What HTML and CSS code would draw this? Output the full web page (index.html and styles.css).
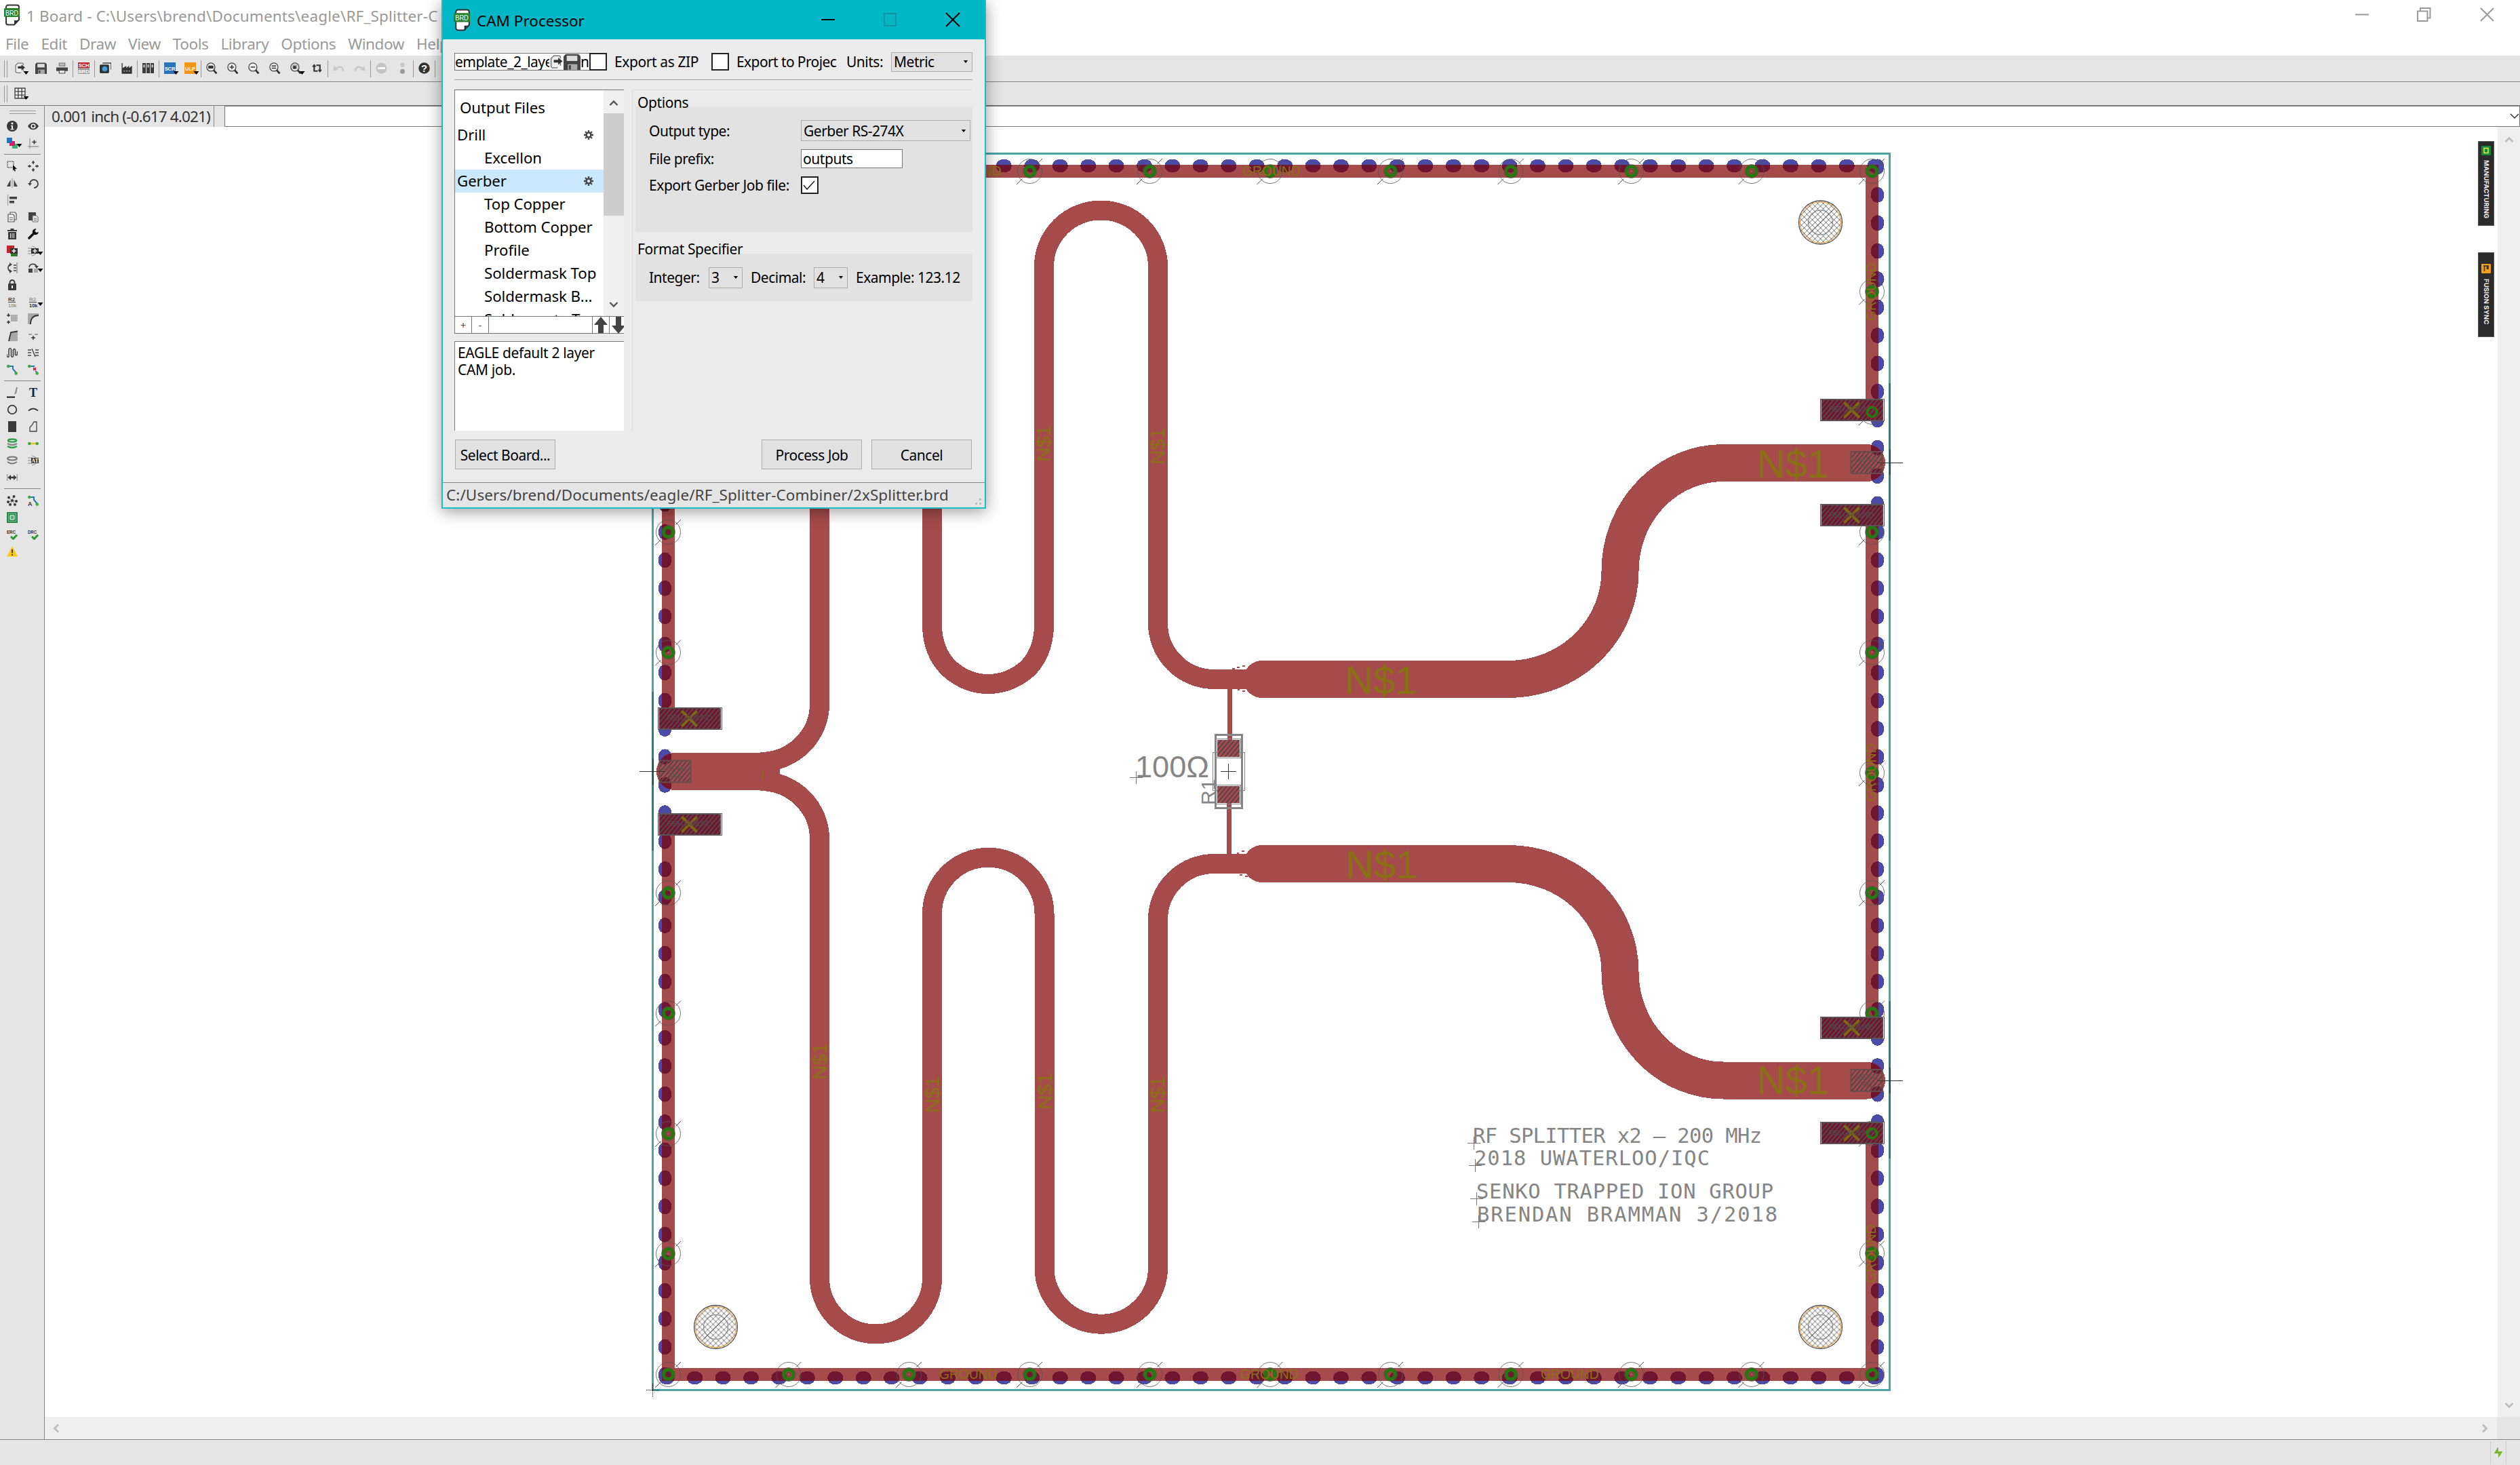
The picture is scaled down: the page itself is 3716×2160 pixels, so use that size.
FILE: index.html
```html
<!DOCTYPE html>
<html lang="en">
<head>
<meta charset="utf-8">
<title>1 Board</title>
<link rel="stylesheet" href="styles.css">
</head>
<body>
<svg class="defs" width="0" height="0">
  <symbol id="brd" viewBox="0 0 24 32"><path d="M6 1.500h13a3 3 0 0 1 3 3V23l-7 7.500H6a3 3 0 0 1-3-3v-23a3 3 0 0 1 3-3z" fill="#fff" stroke="#333" stroke-width="2"/><path d="M15 31v-7h7z" fill="#333"/><rect y="6" width="23" height="13" rx="1.500" fill="#27802a"/><text x="11.500" y="16.500" text-anchor="middle" textLength="19" lengthAdjust="spacingAndGlyphs" class="tiny" font-size="11" fill="#fff">BRD</text></symbol>
  <symbol id="open" viewBox="0 0 16 16"><path d="M9.500 14.500H4a2 2 0 0 1-2-2V4l3-3h6a1.500 1.500 0 0 1 1.500 1.500V4M12.500 9v3" fill="#eee" stroke="#777" stroke-width="1.200"/><path d="M5 5.500h5V3l5 4-5 4V8.500H5z" fill="#333"/></symbol>
  <symbol id="save" viewBox="0 0 16 16"><path d="M2 .5h12l2 2V16H0V2.500z" fill="#444"/><path d="M3 2h10v5H3z" fill="#ddd"/><path d="M4 10h9v6H4z" fill="#aaa"/><path d="M5 11h2v4H5z" fill="#444"/></symbol>
  <symbol id="lens" viewBox="0 0 16 16"><circle cx="6.500" cy="6.500" r="5.700" fill="#ececec" stroke="#444" stroke-width="1.200"/><path d="M10.500 11l4 4.500" stroke="#333" stroke-width="2.600"/></symbol>
  <symbol id="drop" viewBox="0 0 8 5"><path d="M0 0h8L4 5z"/></symbol>
  <symbol id="gear" viewBox="0 0 16 16"><circle cx="8" cy="8" r="4" fill="none" stroke="#444" stroke-width="3"/><path d="M8 0v3M8 13v3M0 8h3M13 8h3M2.300 2.300l2 2M11.700 11.700l2 2M13.700 2.300l-2 2M4.300 11.700l-2 2" stroke="#444" stroke-width="2.600"/></symbol>
  <symbol id="trace" viewBox="0 0 16 16"><path d="M3 3h6v4l5 6" fill="none" stroke="#2a73c0" stroke-width="2"/><circle cx="2.300" cy="3" r="2.300" fill="#3eaa3e"/><circle cx="13.700" cy="13.500" r="2.300" fill="#3eaa3e"/></symbol>
</svg>

<header class="titlebar">
  <svg class="app-icon" width="24" height="32"><use href="#brd"/></svg>
  <span class="app-title">1 Board - C:\Users\brend\Documents\eagle\RF_Splitter-C</span>
  <svg class="win-buttons" width="206" height="22" fill="none" stroke="#999" stroke-width="2"><path d="M0 10.500h20M92 5.500h14.500v14.500H92zM96 5V1h14.500v14.500H107M185 1l19 19M204 1l-19 19"/></svg>
</header>
<nav class="menubar"><span>File</span><span>Edit</span><span>Draw</span><span>View</span><span>Tools</span><span>Library</span><span>Options</span><span>Window</span><span>Help</span></nav>

<div class="toolbar">
  <i class="grip"></i>
  <b><svg><use href="#open"/></svg><svg class="dd"><use href="#drop"/></svg></b>
  <b><svg><use href="#save"/></svg></b>
  <b><svg viewBox="0 0 16 16"><path d="M4 1h8v4H4z" fill="#bbb" stroke="#777"/><path d="M0 7h16v5H0z" fill="#444"/><path d="M4 11h8v4H4z" fill="#eee" stroke="#444"/></svg></b>
  <i class="sep"></i>
  <b><svg viewBox="0 0 16 16"><path d="M0 0h16v8H0z" fill="#c0202c"/><path d="M0 8h16v8H0z" fill="#999"/><text x="8" y="7" class="tiny" text-anchor="middle" font-size="7" fill="#fff">SCH</text><text x="8" y="15" class="tiny" text-anchor="middle" font-size="7" fill="#fff">BRD</text></svg></b>
  <i class="sep"></i>
  <b><svg viewBox="0 0 16 16"><path d="M4 1h12v9" fill="none" stroke="#444" stroke-width="1.500"/><rect y="3" width="13" height="12" rx="1.500" fill="#333"/><circle cx="7" cy="9" r="3.600" fill="#3aa0e0"/></svg></b>
  <b><svg viewBox="0 0 16 16"><path d="M2 15V1M2 15V9l5-3v3l4-3v3l4-3v9z" fill="#333" stroke="#333" stroke-width="1.300"/><path d="M4 12h9" stroke="#ddd" stroke-dasharray="2 1.500"/></svg></b>
  <i class="sep"></i>
  <b><svg viewBox="0 0 16 16"><path d="M0 1h4.700v14H0zM5.700 1h4.700v14H5.700zM11.400 1h4.600v14h-4.600z" fill="#3a3a3a"/><path d="M1.300 3h2v4h-2zM7 3h2v4H7zM12.700 3h2v4h-2z" fill="#ccc"/></svg></b>
  <i class="sep"></i>
  <b><svg viewBox="0 0 16 16"><path d="M0 0h16v16H0z" fill="#2a73b8"/><text x="8" y="11" class="tiny" text-anchor="middle" font-size="7" fill="#fff">SCR</text></svg><svg class="dd"><use href="#drop"/></svg></b>
  <b><svg viewBox="0 0 16 16"><path d="M0 0h16v16H0z" fill="#f39517"/><text x="8" y="11" class="tiny" text-anchor="middle" font-size="7" fill="#fff">ULP</text></svg><svg class="dd"><use href="#drop"/></svg></b>
  <i class="sep"></i>
  <b><svg viewBox="0 0 16 16"><use href="#lens"/><path d="M3 4.500h7v4H3z" fill="#333"/></svg></b>
  <b><svg viewBox="0 0 16 16"><use href="#lens"/><path d="M3.500 6.500h6M6.500 3.500v6" stroke="#333" stroke-width="1.400"/></svg></b>
  <b><svg viewBox="0 0 16 16"><use href="#lens"/><path d="M3.500 6.500h6" stroke="#333" stroke-width="1.400"/></svg></b>
  <b><svg viewBox="0 0 16 16"><use href="#lens"/><path d="M3.500 5h6M3.500 8h6" stroke="#333" stroke-width="1.400"/></svg></b>
  <b><svg viewBox="0 0 16 16"><use href="#lens"/><path d="M3 3h7v6H3z" fill="#aaa"/><path d="M4 5h4v4H4z" fill="#333"/></svg><svg class="dd"><use href="#drop"/></svg></b>
  <b><svg viewBox="0 0 16 16" fill="none" stroke="#333" stroke-width="2"><path d="M4 5v7h5M12 11V4H7"/><path d="M1 6l3-4 3 4zM9 10l3 4 3-4z" fill="#333" stroke="none"/></svg></b>
  <i class="sep"></i>
  <b><svg viewBox="0 0 16 16"><path d="M14 12c0-6-5-7-9-4" fill="none" stroke="#c8c8c8" stroke-width="2.500"/><path d="M0 12l2-7 5 5z" fill="#c8c8c8"/></svg></b>
  <b><svg viewBox="0 0 16 16"><path d="M2 12c0-6 5-7 9-4" fill="none" stroke="#c8c8c8" stroke-width="2.500"/><path d="M16 12l-2-7-5 5z" fill="#c8c8c8"/></svg></b>
  <i class="sep"></i>
  <b><svg viewBox="0 0 16 16"><circle cx="8" cy="8" r="7.500" fill="#c4c4c4"/><path d="M3 8h10" stroke="#fff" stroke-width="2.500"/></svg></b>
  <b><svg viewBox="0 0 16 16"><circle cx="8" cy="3.500" r="3" fill="#c8c8c8"/><circle cx="8" cy="12.500" r="3.300" fill="#999"/></svg></b>
  <i class="sep"></i>
  <b><svg viewBox="0 0 16 16"><circle cx="8" cy="8" r="7.800" fill="#333"/><text x="8" y="13" text-anchor="middle" font-size="14" font-weight="700" fill="#fff" class="tiny">?</text></svg></b>
  <i class="sep"></i>
</div>
<div class="toolbar second">
  <i class="grip"></i>
  <b><svg viewBox="0 0 16 16"><path d="M1 1h14v14H1zM1 5.500h14M1 10.500h14M5.500 1v14M10.500 1v14" fill="#f2f2f2" stroke="#444" stroke-width="1.300"/></svg><svg class="dd"><use href="#drop"/></svg></b>
</div>

<div class="work">
  <aside class="palette">
    <div class="hgrip"></div>
    <div class="grid">
      <b><svg viewBox="0 0 16 16"><circle cx="8" cy="8" r="8" fill="#3a3a3a"/><path d="M6 7h3v5h1.500v1.300h-5V12H7V8H6z" fill="#fff"/><circle cx="8" cy="4" r="1.500" fill="#fff"/></svg></b>
      <b><svg viewBox="0 0 16 16"><path d="M0 8c4-7 12-7 16 0-4 7-12 7-16 0z" fill="#3a3a3a"/><circle cx="8" cy="8" r="3.600" fill="#fff"/><circle cx="8" cy="8" r="2" fill="#3a3a3a"/></svg></b>
      <b><svg viewBox="0 0 16 16"><path d="M8 9h8v7H8z" fill="#3cb070"/><path d="M4 5h8v7H4z" fill="#d81b60"/><path d="M0 0h8v8H0z" fill="#2a73c0"/></svg><svg class="dd"><use href="#drop"/></svg></b>
      <b><svg viewBox="0 0 16 16"><path d="M3 1v15M0 13h16" stroke="#999" stroke-width="1.300"/><path d="M6.500 6.500h6M9.500 3.500v6" stroke="#333" stroke-width="1.500"/></svg></b>
    </div>
    <hr>
    <div class="grid">
      <b><svg viewBox="0 0 16 16"><path d="M1 1h9v9H1z" fill="none" stroke="#333" stroke-width="1.400" stroke-dasharray="1.500 1.500"/><path d="M9 6l6 6-3 .3 1 3-1.500.500-1-3L9 15z" fill="#111"/></svg></b>
      <b><svg viewBox="0 0 16 16" stroke="#333" stroke-width="1.400"><path d="M8 0v5M6 2.500h4M8 11v5M6 13.500h4M0 8h5M2.500 6v4M11 8h5M13.500 6v4"/></svg></b>
      <b><svg viewBox="0 0 16 16"><path d="M8 1v14" stroke="#aaa" stroke-width="1.500"/><path d="M5.500 3v10H0zM10.500 3v10H16z" fill="#444"/></svg></b>
      <b><svg viewBox="0 0 16 16"><path d="M3 9a6 6 0 1 1 6 6" fill="none" stroke="#444" stroke-width="1.800"/><path d="M0 8h6l-3 4z" fill="#444"/></svg></b>
      <b><svg viewBox="0 0 16 16"><path d="M1.500 0v16" stroke="#aaa" stroke-width="1.500"/><path d="M4 3h11v3.500H4zM4 9h7v3.500H4z" fill="#444"/></svg></b><b></b>
      <b><svg viewBox="0 0 16 16" fill="#f4f4f4" stroke="#555" stroke-width="1.200"><path d="M5 1h7l2 2v9H5z"/><path d="M2 4h7l2 2v9H2z"/><path d="M4 9h5M4 12h5"/></svg></b>
      <b><svg viewBox="0 0 16 16"><path d="M1 1h11v12H1z" fill="#444"/><path d="M7 6h6l2 2v7H7z" fill="#eee" stroke="#666"/><path d="M9 10h4M9 12.500h4" stroke="#666"/></svg></b>
      <b><svg viewBox="0 0 16 16"><path d="M1 2h14v2H1zM5.500 0h5v2h-5zM2 5h12v11H2z" fill="#3a3a3a"/><path d="M5.500 7v7M8 7v7M10.500 7v7" stroke="#eee"/></svg></b>
      <b><svg viewBox="0 0 16 16"><path d="M2 14L10 6" stroke="#111" stroke-width="3.500" stroke-linecap="round"/><path d="M12.500 .5A4.500 4.500 0 1 0 15.800 5L12.500 6 10.300 3.800z" fill="#111"/></svg></b>
      <b><svg viewBox="0 0 16 16"><path d="M0 0h11v11H0z" fill="#c0262e"/><path d="M6 8h10v8H6z" fill="#2d7a2a"/><path d="M5 4h11v8H5z" fill="#333"/><path d="M7.500 8h6M10.500 5v6" stroke="#fff" stroke-width="1.500"/></svg></b>
      <b><svg viewBox="0 0 16 16"><path d="M0 4h6M0 8h6M0 12h6M6 1c5 1 8 4 8 7s-3 6-8 7" stroke="#888" fill="none"/><path d="M5 4h11v8H5z" fill="#333"/><path d="M7.500 8h6M10.500 5v6" stroke="#fff" stroke-width="1.500"/></svg><svg class="dd"><use href="#drop"/></svg></b>
      <b><svg viewBox="0 0 16 16"><path d="M5 3c-4 2-4 8 0 10M10 4h4M10 8h4M10 12h4" fill="none" stroke="#444" stroke-width="1.700"/><path d="M4 0l4 3-4 3zM4 10l4 3-4 3z" fill="#444"/><path d="M14 0h2v16h-2z" fill="#aaa"/></svg></b>
      <b><svg viewBox="0 0 16 16"><path d="M2 7c1-6 9-6 11-1" fill="none" stroke="#444" stroke-width="1.700"/><path d="M10 5h6l-3 4z" fill="#444"/><path d="M1 9h6v6H1z" fill="#444"/><path d="M9 9h6v6H9z" fill="#aaa"/></svg><svg class="dd"><use href="#drop"/></svg></b>
      <b><svg viewBox="0 0 16 16"><rect x="2" y="6" width="12" height="10" rx="1" fill="#3a3a3a"/><path d="M4.500 7V4.500a3.500 3.500 0 0 1 7 0V7" fill="none" stroke="#3a3a3a" stroke-width="2"/><path d="M8 9v4" stroke="#fff" stroke-width="2"/></svg></b><b></b>
      <b><svg viewBox="0 0 16 16"><text x="2" y="7" font-size="8" class="tiny" fill="#444">R2</text><path d="M2 8.500h11" stroke="#444"/><text x="2" y="15.500" font-size="7.500" class="tiny" fill="#999">10k</text></svg></b>
      <b><svg viewBox="0 0 16 16"><text x="2" y="7" font-size="8" class="tiny" fill="#999">R2</text><path d="M2 8.500h11" stroke="#444"/><text x="2" y="15.500" font-size="7.500" class="tiny" fill="#333">10k</text></svg><svg class="dd"><use href="#drop"/></svg></b>
      <b><svg viewBox="0 0 16 16"><path d="M6 3h10M6 5.500h10M6 8h10M6 10.500h10M7 3v9M10 3v9M13 3v9" stroke="#aaa" stroke-width="2"/><path d="M0 3h5M2.500 0v5M0 13h5M2.500 10.500v5" stroke="#333" stroke-width="1.500"/></svg></b>
      <b><svg viewBox="0 0 16 16"><path d="M0 0h16v4C9 4 4 9 4 16H0z" fill="#aaa"/><path d="M4 16C4 8 8 3 16 3" fill="none" stroke="#333" stroke-width="1.800"/></svg></b>
      <b><svg viewBox="0 0 16 16"><path d="M3 16L6 3l10-1v14z" fill="#aaa"/><path d="M3 16L6 3l10-1.500" fill="none" stroke="#333" stroke-width="1.800"/></svg></b>
      <b><svg viewBox="0 0 16 16"><path d="M1 6h5M10 6h5" stroke="#888" stroke-width="1.300"/><path d="M5 11h6M8 8v6" stroke="#333" stroke-width="1.500"/></svg></b>
      <b><svg viewBox="0 0 16 16"><path d="M0 10v3q2.500 3 3 0V3q2-3 3.500 0v10q1.500 3 3 0V4q2-3 3 0v7q2 2 3-1V6" fill="none" stroke="#444" stroke-width="1.600"/></svg></b>
      <b><svg viewBox="0 0 16 16"><path d="M0 4h5M0 8h5M0 12h5M11 4h5M11 8h5M11 12h5M6 2l5 12" stroke="#444" stroke-width="1.400"/></svg></b>
      <b><svg><use href="#trace"/></svg></b>
      <b><svg viewBox="0 0 16 16"><use href="#trace"/><path d="M7 4h6v6H7z" fill="#fff"/><path d="M8 5l4 4M12 5l-4 4" stroke="#d81b3a" stroke-width="1.800"/></svg></b>
    </div>
    <hr>
    <div class="grid">
      <b><svg viewBox="0 0 16 16"><path d="M0 14.500h12" stroke="#000" stroke-width="1.800"/><path d="M11 11l1-3 2-8h2l-2 9z" fill="#888"/></svg></b>
      <b><svg viewBox="0 0 16 16"><text x="8" y="14" text-anchor="middle" class="serif" font-size="18" fill="#222">T</text></svg></b>
      <b><svg viewBox="0 0 16 16"><circle cx="8" cy="8" r="6.300" fill="none" stroke="#3a3a3a" stroke-width="1.800"/></svg></b>
      <b><svg viewBox="0 0 16 16"><path d="M1 9.500q7-6 14 0" fill="none" stroke="#3a3a3a" stroke-width="2"/></svg></b>
      <b><svg viewBox="0 0 16 16"><path d="M2 0h12v16H2z" fill="#3a3a3a"/></svg></b>
      <b><svg viewBox="0 0 16 16"><path d="M3 15V9l3-3 3-5h4v14z" fill="none" stroke="#444" stroke-width="1.300"/></svg></b>
      <b><svg viewBox="0 0 16 16" fill="none" stroke-width="2.500"><path d="M1 12q7 4 14 0" stroke="#2fa04c"/><path d="M1 8q7 4 14 0" stroke="#888"/><ellipse cx="8" cy="3.500" rx="6" ry="2" fill="#fff" stroke="#2fa04c"/></svg></b>
      <b><svg viewBox="0 0 16 16"><path d="M2 8h12" stroke="#f0c020" stroke-width="2.500"/><circle cx="2.300" cy="8" r="2.300" fill="#3eaa3e"/><circle cx="13.700" cy="8" r="2.300" fill="#3eaa3e"/></svg></b>
      <b><svg viewBox="0 0 16 16" fill="none" stroke="#777" stroke-width="2"><ellipse cx="8" cy="5" rx="7" ry="2.500"/><path d="M1 10q7 5 14 0"/></svg></b>
      <b><svg viewBox="0 0 16 16"><path d="M0 4h6M0 8h6M0 12h6M6 1c5 1 8 4 8 7s-3 6-8 7" stroke="#888" fill="none"/><path d="M5 4h11v8H5z" fill="#333"/><text x="10.500" y="11" text-anchor="middle" class="serif" font-size="8" font-weight="700" fill="#fff">AT</text></svg></b>
      <b><svg viewBox="0 0 16 16"><path d="M.7 3v10M15.300 3v10" stroke="#999" stroke-width="1.300"/><path d="M1.500 8L6 4v2.800h4V4l4.500 4-4.500 4V9.200H6V12z" fill="#3a3a3a"/></svg></b><b></b>
    </div>
    <hr>
    <div class="grid">
      <b><svg viewBox="0 0 16 16"><path d="M3 4l5 4 2-6M8 8l6 1M8 8l-6 2M8 8l-3 6M8 8l4 6" stroke="#888" fill="none"/><g fill="#3a3a3a"><circle cx="3" cy="3.500" r="2"/><circle cx="10.500" cy="2" r="2"/><circle cx="8" cy="8" r="2"/><circle cx="14" cy="9" r="2"/><circle cx="2" cy="10" r="2"/><circle cx="5" cy="14" r="2"/><circle cx="12" cy="14" r="2"/></g></svg></b>
      <b><svg viewBox="0 0 16 16"><use href="#trace"/><text y="15.500" class="tiny" font-size="9" fill="#333">A</text></svg></b>
      <b><svg viewBox="0 0 16 16"><path d="M0 0h16v16H0z" fill="#23864a"/><path d="M2.500 2.500h11v11h-11z" fill="none" stroke="#d5ecd9" stroke-dasharray="1 1"/><path d="M5 5h6v6H5z" fill="#58a878" stroke="#fff"/></svg></b><b></b>
      <b><svg viewBox="0 0 16 16"><text y="7" class="tiny" font-size="8" textLength="13" lengthAdjust="spacingAndGlyphs" fill="#333">ERC</text><path d="M6 11l3.500 3.500L15 8.500" fill="none" stroke="#2e9a35" stroke-width="3"/></svg></b>
      <b><svg viewBox="0 0 16 16"><text y="7" class="tiny" font-size="8" textLength="13" lengthAdjust="spacingAndGlyphs" fill="#333">DRC</text><path d="M6 11l3.500 3.500L15 8.500" fill="none" stroke="#2e9a35" stroke-width="3"/></svg></b>
      <b><svg viewBox="0 0 16 16"><path d="M8 .5l8 15H0z" fill="#fdc910"/><path d="M8 5v5.500M8 12v2" stroke="#333" stroke-width="1.800"/></svg></b>
    </div>
  </aside>

  <main class="editor">
    <div class="params"><span class="coords">0.001 inch (-0.617 4.021)</span><i class="bar"></i><div class="command"><svg width="14" height="9" fill="none" stroke="#333" stroke-width="1.500"><path d="M1 1l6 6 6-6"/></svg></div></div>
    <div class="viewport">
      <svg class="board" viewBox="66 187 3617 1902" width="3617" height="1902">
        <defs>
          <pattern id="hatch" width="5" height="5" patternUnits="userSpaceOnUse" patternTransform="rotate(40)"><rect width="2" height="5" fill="#5a444c"/></pattern>
          <pattern id="cross" width="8" height="8" patternUnits="userSpaceOnUse"><path d="M0 0l8 8M8 0L0 8" stroke="#777" stroke-width="1"/></pattern>
          <g id="copper" fill="none" stroke-linejoin="miter">
            <path stroke-width="19" d="M985.500 1044V252.500H2760.500V590M2760.500 774V1501M2760.500 1686V2026.500H985.500V1231"/>
            <g stroke-width="29">
              <path d="M1121 1123.500A87.500 85.500 0 0 0 1208.500 1038V600"/>
              <path d="M1374.500 600V925Q1376 962 1399 985Q1425 1008.500 1457 1008.500Q1490 1008.500 1516 985Q1538 962 1539.500 925V393A84 83 0 0 1 1707.500 393V919A83 82.500 0 0 0 1790 1001.500H1862"/>
              <path d="M1121 1151.500A87.500 85.500 0 0 1 1208.500 1237V1884A83 83 0 0 0 1374.500 1884V1347A82.500 82.500 0 0 1 1540 1347V1869A83.500 83 0 0 0 1707.500 1869V1356A83 82.500 0 0 1 1790 1273.500H1862"/>
            </g>
            <g stroke-width="55" stroke-linecap="round">
              <path stroke-linecap="butt" d="M995 1137.500H1150"/><path d="M995.500 1137.500H1100"/>
              <path d="M1861 1001.500H2224A165 159.500 0 0 0 2389 842A152 159.500 0 0 1 2541 682.500H2752.500"/>
              <path d="M1861 1273.500H2224A165 159.500 0 0 1 2389 1433A152 160 0 0 0 2541 1593H2752.500"/>
            </g>
            <path stroke-width="7" d="M1813.500 1010V1092M1812.500 1183V1265"/>
          </g>
          <path id="dots" fill="none" stroke-width="19" stroke-linecap="round" stroke-dasharray="4 37.430" d="M981.200 244.500H2770M981.200 2031.500H2770M980.500 243.900V2032M2768.500 243.900V2032"/>
          <mask id="onCopper" maskUnits="userSpaceOnUse" x="900" y="200" width="2000" height="1900"><use href="#copper" stroke="#fff"/></mask>
          <g id="via" fill="none">
            <circle r="7" stroke="#23780f" stroke-width="5"/><circle r="10" stroke="#5a4a4a" stroke-opacity=".8"/><circle r="3" stroke="#6d2a34"/>
            <circle r="18" stroke="#555" stroke-opacity=".8"/><path d="M-19.500 19.500L-11 11M11-11L18.500-18.500" stroke="#555"/>
          </g>
          <g id="pad">
            <rect x=".5" y=".5" width="94" height="32" fill="#fff" stroke="#5c5256"/>
            <rect x="2" y="2" width="91" height="29" fill="#70152d"/><rect x="2" y="2" width="91" height="29" fill="url(#hatch)"/><rect x="2" y="1.500" width="90" height="30" fill="none" stroke="#5c5256"/>
            <path d="M36.500 6.500l20 20M56.500 6.500l-20 20" stroke="#7b6912" stroke-width="4" stroke-linecap="round"/>
          </g>
          <g id="sig"><rect width="46" height="32" fill="url(#hatch)" stroke="#6a4b4b" stroke-width="2"/><g class="tiny" font-size="10" fill="#665048" text-anchor="middle"><text x="23" y="15">SIGNAL</text><text x="23" y="26">N$1</text></g></g>
          <g id="hole" fill="none"><circle r="32" fill="url(#cross)" stroke="#555" stroke-width="1.300"/><circle r="30" stroke="#f0a030"/><circle r="18" stroke="#777"/><path d="M-18 18L19-19" stroke="#555"/></g>
          <path id="mark" d="M-9.500 0H9.500M0-9.500V9.500" stroke="#777" stroke-width="1"/>
        </defs>
        <g shape-rendering="crispEdges">
          <use href="#dots" stroke="#4b4ba5"/>
          <use href="#copper" stroke="#a54b4b"/>
          <path d="M1817 985h4v2h-4zM1824 983h4v2h-4zM1832 981h4v2h-4zM1825 1016h3v2h-3zM1832 1018h4v2h-4zM1824 1257h3v2h-3zM1831 1254h4v2h-4zM1828 1289h4v2h-4zM1836 1291h4v2h-4z" fill="#a54b4b"/>
          <g mask="url(#onCopper)"><use href="#dots" stroke="#70152f"/></g>
          <rect x="962.500" y="226.500" width="1824" height="1822.500" fill="none" stroke="#4aa5a5" stroke-width="3"/>
          <path d="M962.500 1020V1254M2786.500 565V797M2786.500 1476V1708" stroke="#24807f" stroke-width="3"/>
          <path d="M962.500 1119V1157M2786.500 663V700M2786.500 1574V1612" stroke="#0f5a5a" stroke-width="2"/>
        </g>
        <g>
          <use href="#via" x="985.500" y="784.500"/><use href="#via" x="985.500" y="962"/><use href="#via" x="985.500" y="1316.500"/><use href="#via" x="985.500" y="1494"/><use href="#via" x="985.500" y="1671.500"/><use href="#via" x="985.500" y="1848.500"/>
          <use href="#via" x="2760.500" y="430"/><use href="#via" x="2760.500" y="607.500"/><use href="#via" x="2760.500" y="784.500"/><use href="#via" x="2760.500" y="962"/><use href="#via" x="2760.500" y="1139.500"/><use href="#via" x="2760.500" y="1316.500"/><use href="#via" x="2760.500" y="1494"/><use href="#via" x="2760.500" y="1671"/><use href="#via" x="2760.500" y="1848"/>
          <g id="viarow"><use href="#via" x="985.500" y="252.500"/><use href="#via" x="1163" y="252.500"/><use href="#via" x="1340.500" y="252.500"/><use href="#via" x="1518.500" y="252.500"/><use href="#via" x="1695.500" y="252.500"/><use href="#via" x="1873" y="252.500"/><use href="#via" x="2050.500" y="252.500"/><use href="#via" x="2228" y="252.500"/><use href="#via" x="2405.500" y="252.500"/><use href="#via" x="2583" y="252.500"/><use href="#via" x="2760.500" y="252.500"/></g>
          <use href="#viarow" y="1774"/>
        </g>
        <use href="#pad" x="970" y="1043"/><use href="#pad" x="970" y="1199"/>
        <use href="#pad" x="2684" y="588"/><use href="#pad" x="2684" y="743"/><use href="#pad" x="2684" y="1499"/><use href="#pad" x="2684" y="1654"/>
        <g class="tiny" font-size="11" fill="#5a444c"><text x="984" y="1062" textLength="66">P$8 GROUND</text><text x="984" y="1218" textLength="66">P$9 GROUND</text><text x="2697" y="607" textLength="66">P$8 GROUND</text><text x="2697" y="763" textLength="66">P$3 GROUND</text><text x="2697" y="1518" textLength="66">P$4 GROUND</text><text x="2697" y="1674" textLength="66">P$5 GROUND</text></g>
        <g fill="none" stroke="#23780f" stroke-width="4"><circle cx="2760.500" cy="607.500" r="7"/><circle cx="2760.500" cy="1671" r="7"/></g>
        <g fill="none" stroke="#b0102c"><circle cx="2760.500" cy="607.500" r="9.500"/><circle cx="2760.500" cy="1671" r="9.500"/></g>
        <use href="#sig" x="972.500" y="1121.500"/><use href="#sig" x="2729.500" y="666"/><use href="#sig" x="2729.500" y="1577"/>
        <path d="M943 1137.500H981M2768 682.500H2806M2768 1593.500H2806" stroke="#333"/>
        <path d="M1124.500 1137V1150" stroke="#8a6f17"/>
        <use href="#hole" x="2684.500" y="328"/><use href="#hole" x="1055.500" y="1956.500"/><use href="#hole" x="2684.500" y="1956.500"/>
        <g class="net" fill="#8a7014">
          <g font-size="58"><text x="1983" y="1023">N$1</text><text x="1984" y="1295">N$1</text><text x="2590.500" y="704">N$1</text><text x="2590.500" y="1613">N$1</text></g>
          <g font-size="29.500"><text transform="translate(1549 681) rotate(-90)">N$1</text><text transform="translate(1717 685) rotate(-90)">N$1</text><text transform="translate(1219 1592) rotate(-90)">N$1</text><text transform="translate(1385 1641) rotate(-90)">N$1</text><text transform="translate(1551 1636) rotate(-90)">N$1</text><text transform="translate(1717 1641) rotate(-90)">N$1</text></g>
          <g font-size="19.300"><text x="1391" y="258.500">GROUND</text><text x="1832" y="258.500">GROUND</text><text x="1385" y="2033">GROUND</text><text x="1829" y="2033">GROUND</text><text x="2272" y="2033">GROUND</text>
          <text transform="translate(2766 473) rotate(-90)">GROUND</text><text transform="translate(2766 1182) rotate(-90)">GROUND</text><text transform="translate(2766 1891) rotate(-90)">GROUND</text></g>
        </g>
        <g fill="none" stroke="#868686">
          <rect x="1792.500" y="1083.500" width="39" height="108" stroke-width="3"/>
          <rect x="1788.500" y="1109.500" width="47" height="56"/><rect x="1793.500" y="1089.500" width="36" height="28"/><rect x="1793.500" y="1157.500" width="36" height="28"/>
          <g stroke="none"><path d="M1795 1091h33v25h-33zM1795 1159h33v25h-33z" fill="#a54b4b"/><path d="M1795 1091h33v25h-33zM1795 1159h33v25h-33z" fill="url(#hatch)"/></g>
          <path d="M1800 1137.500h23M1811.500 1126v23" stroke="#333"/>
        </g>
        <g class="net" fill="#858585"><text x="1674" y="1146" font-size="43.500" textLength="109" lengthAdjust="spacingAndGlyphs">100Ω</text><text transform="translate(1791.500 1187) rotate(-90)" font-size="30">R1</text></g>
        <g class="silk" fill="#858585" font-size="30.500">
          <text x="2172" y="1685" textLength="426">RF SPLITTER x2 – 200 MHz</text>
          <text x="2174" y="1718" textLength="347">2018 UWATERLOO/IQC</text>
          <text x="2177" y="1766.500" textLength="438">SENKO TRAPPED ION GROUP</text>
          <text x="2178" y="1801" textLength="443">BRENDAN BRAMMAN 3/2018</text>
        </g>
        <use href="#mark" x="1675.500" y="1146.500"/><use href="#mark" x="2173.500" y="1685.500"/><use href="#mark" x="2175.500" y="1718.500"/><use href="#mark" x="2177.500" y="1767.500"/><use href="#mark" x="2180.500" y="1801.500"/>
        <path d="M953 2049.500h20M962.500 2040v20" stroke="#000" stroke-dasharray="1 1"/>
      </svg>
      <div class="vscroll"><svg width="14" height="9" viewBox="0 0 14 9"><path d="M1.500 8l5.500-5.500L12.500 8"/></svg><svg width="14" height="9" viewBox="0 0 14 9"><path d="M1.500 1l5.500 5.500L12.500 1"/></svg></div>
      <div class="docks"><div class="tab"><svg width="14" height="14" viewBox="0 0 14 14"><rect width="14" height="14" rx="1" fill="#168a3c"/><path d="M4 3.500h6v7H4z" fill="#168a3c" stroke="#e8e84a" stroke-width="1.500"/></svg><span class="t1">MANUFACTURING</span></div><div class="tab fusion"><svg width="14" height="14" viewBox="0 0 14 14"><rect width="14" height="14" rx="1" fill="#f5a01c"/><path d="M3 3h8M4.500 3v8M8.500 3v5M10 3v5" stroke="#333" stroke-width="1.600"/></svg><span class="t2">FUSION SYNC</span></div></div>
    </div>
    <div class="hscroll"><svg width="9" height="14" viewBox="0 0 9 14"><path d="M8 1.500L2.500 7 8 12.500"/></svg><svg width="9" height="14" viewBox="0 0 9 14"><path d="M1 1.500L6.500 7 1 12.500"/></svg><i></i></div>
  </main>
</div>
<footer class="status"><i></i><svg width="14" height="18" viewBox="0 0 14 18"><path d="M6.500 1.500v6h6l-5 8v-6h-6z" fill="#78b833" stroke="#78b833"/></svg><i></i></footer>

<section class="dialog">
  <header><svg width="25" height="33"><use href="#brd"/></svg><span class="dt">CAM Processor</span>
    <svg class="db" width="206" height="22" fill="none" stroke-width="2"><path d="M0 11h20" stroke="#000"/><path d="M93 2h17v18H93z" stroke="#1493a3"/><path d="M184 1l20 20M204 1l-20 20" stroke="#000"/></svg></header>
  <div class="body">
    <div class="job">
      <div class="file"><span>emplate_2_laye</span><svg width="21" height="25"><use href="#open"/></svg><svg width="25" height="25"><use href="#save"/></svg><span class="ext">n</span></div>
      <i class="check"></i><label class="l1">Export as ZIP</label><i class="check"></i><label class="l2">Export to Projec</label><label class="l3">Units:</label><div class="combo units">Metric<svg><use href="#drop"/></svg></div>
    </div>
    <div class="cols">
      <div class="left">
        <div class="tree">
          <div class="rows"><div class="head">Output Files</div><div>Drill<svg><use href="#gear"/></svg></div><div class="sub">Excellon</div><div class="sel">Gerber<svg><use href="#gear"/></svg></div><div class="sub">Top Copper</div><div class="sub">Bottom Copper</div><div class="sub">Profile</div><div class="sub">Soldermask Top</div><div class="sub">Soldermask B...</div><div class="sub">Solderpaste Top</div></div>
          <div class="tscroll"><svg width="14" height="9"><path d="M1.500 8l5.500-5.500L12.500 8"/></svg><i></i><svg width="14" height="9"><path d="M1.500 1l5.500 5.500L12.500 1"/></svg></div>
        </div>
        <div class="strip"><span>+</span><span>-</span><span class="blank"></span><span><svg width="22" height="25" viewBox="0 0 22 25"><path d="M11 0l10 12h-6v13H7V12H1z" fill="#444"/></svg></span><span class="last"><svg width="22" height="25" viewBox="0 0 22 25"><path d="M11 25L1 13h6V0h8v13h6z" fill="#444"/></svg></span></div>
        <div class="desc">EAGLE default 2 layer<br>CAM job.</div>
      </div>
      <div class="right">
        <h3>Options</h3>
        <div class="box opts">
          <div class="r r1"><label>Output type:</label><div class="combo">Gerber RS-274X<svg><use href="#drop"/></svg></div></div>
          <div class="r r2"><label>File prefix:</label><div class="input">outputs</div></div>
          <div class="r r3"><label>Export Gerber Job file:</label><i class="check"><svg width="20" height="20" fill="none" stroke="#222" stroke-width="1.500"><path d="M2 10l5 6L18 4"/></svg></i></div>
        </div>
        <h3 class="fs">Format Specifier</h3>
        <div class="box fmt"><label class="f1">Integer:</label><div class="combo">3<svg><use href="#drop"/></svg></div><label class="f2">Decimal:</label><div class="combo">4<svg><use href="#drop"/></svg></div><label class="f3">Example: 123.12</label></div>
      </div>
    </div>
    <div class="actions"><button>Select Board...</button><button class="push">Process Job</button><button>Cancel</button></div>
  </div>
  <footer><span>C:/Users/brend/Documents/eagle/RF_Splitter-Combiner/2xSplitter.brd</span><svg width="10" height="10" viewBox="0 0 10 10" fill="#bbb"><path d="M6 0h3v3H6zM6 6h3v3H6zM0 6h3v3H0z"/></svg></footer>
</section>
</body>
</html>
```
FILE: styles.css
```css
* { box-sizing: border-box; }
body { margin: 0; width: 3716px; height: 2160px; overflow: hidden; display: flex; flex-direction: column; background: #fff; font: 22.5px/30px "Noto Sans", sans-serif; color: #000; position: relative; }
.defs { position: absolute; }
.tiny { font-family: "Liberation Sans", sans-serif; }
.serif { font-family: "Liberation Serif", serif; }
.net { font-family: "Liberation Sans", sans-serif; }
.silk { font-family: "DejaVu Sans Mono", monospace; }

.titlebar { height: 48px; flex: none; display: flex; align-items: flex-start; padding: 6px 37px 0 6px; color: #999; }
.app-title { margin: 3px 0 0 9px; flex: 1; white-space: nowrap; letter-spacing: .15px; }
.win-buttons { margin-top: 5px; }
.menubar { height: 34px; flex: none; display: flex; gap: 18px; padding: 2px 0 0 8px; color: #999; letter-spacing: -.4px; }
.toolbar { height: 39px; flex: none; display: flex; align-items: center; padding-left: 6px; background: #e5e5e5; border-bottom: 1px solid #858585; }
.second { height: 35px; border-bottom: 1px solid #777; }
.grip { width: 5px; height: 25px; border: solid #999; border-width: 0 1px; margin-right: 3px; }
.toolbar b { width: 30.95px; height: 18px; display: flex; justify-content: center; position: relative; }
.toolbar b svg { width: 17px; height: 17px; }
.toolbar b .dd, .palette b .dd { position: absolute; width: 9px; height: 5px; right: 2px; bottom: 0; }
.sep { width: 1px; height: 25px; background: #999; }

.work { flex: 1; display: flex; min-height: 0; }
.palette { width: 66px; flex: none; background: #e5e5e5; border-right: 1px solid #858585; padding: 7px 0 0 2px; }
.hgrip { height: 5px; border: solid #999; border-width: 1px 0; margin: 0 12px 5px; }
.grid { display: grid; grid-template-columns: 31px 31px; grid-auto-rows: 25px; }
.palette b { position: relative; display: flex; align-items: center; justify-content: center; }
.palette b > svg { width: 16px; height: 16px; }
.palette b .dd { width: 9px; height: 5px; right: 0; bottom: 6px; }
.palette hr { border: 0; height: 1px; background: #858585; margin: 4px 5px 4px 4px; }

.editor { flex: 1; display: flex; flex-direction: column; min-width: 0; }
.params { height: 31px; flex: none; display: flex; background: #e5e5e5; color: #333; }
.coords { width: 249px; padding-left: 10px; letter-spacing: -.85px; white-space: nowrap; line-height: 32px; }
.bar { width: 1px; background: #858585; margin-right: 15px; }
.command { flex: 1; background: #fff; border: 1px solid #777; display: flex; align-items: center; justify-content: flex-end; }
.viewport { flex: 1; display: flex; min-height: 0; position: relative; }
.board { flex: none; background: #fff; }
.vscroll { flex: 1; background: #efefef; display: flex; flex-direction: column; justify-content: space-between; align-items: center; padding: 14px 0 12px; }
.vscroll svg, .hscroll svg, .tscroll svg { fill: none; stroke: #bcbcbc; stroke-width: 2.6; }
.docks { position: absolute; top: 21px; right: 38px; display: flex; flex-direction: column; gap: 39px; }
.tab { width: 24px; height: 125px; background: #2b2b2b; border: 1px solid #555; display: flex; flex-direction: column; align-items: center; padding-top: 6px; gap: 7px; color: #eee; }
.tab span { writing-mode: vertical-rl; font: 700 9.6px/14px Inter, sans-serif; white-space: nowrap; }
.fusion { padding-top: 16px; gap: 8px; }
.t2 { letter-spacing: .1px; }
.hscroll { height: 33px; flex: none; background: #efefef; display: flex; align-items: center; padding-left: 12px; }
.hscroll svg + svg { margin-left: auto; margin-right: 13px; }
.hscroll i { width: 34px; height: 33px; background: #e5e5e5; }
.status { height: 38px; flex: none; background: #e5e5e5; border-top: 1px solid #858585; display: flex; align-items: center; justify-content: flex-end; padding-right: 20px; gap: 4px; }
.status i { width: 1px; height: 34px; background: #ccc; }

.dialog { position: absolute; left: 651px; top: 0; width: 803px; height: 750px; border: solid #1cbcc8; border-width: 0 2px 2px; background: #ebebeb; box-shadow: 0 4px 22px rgba(0, 0, 0, .4); display: flex; flex-direction: column; font-size: 21px; line-height: 26px; }
.dialog header { height: 58px; flex: none; background: #00b7c7; display: flex; align-items: flex-start; padding: 13px 35px 0 16px; }
.dt { font-size: 22.5px; margin: 5px 0 0 9px; flex: 1; }
.db { margin-top: 5px; }
.body { flex: 1; padding: 18px 18px 0 17px; }
.job { display: flex; align-items: center; height: 30px; margin-bottom: 11px; }
.dialog label { white-space: nowrap; }
.file { width: 199px; height: 26px; border: solid #777; border-width: 1px 0 1px 1px; background: #fff; display: flex; line-height: 24px; overflow: hidden; letter-spacing: -.55px; }
.file span { width: 139px; overflow: hidden; white-space: nowrap; }
.file .ext { width: 12px; margin-left: 0; }
.file svg { flex: none; }
.check { width: 26px; height: 26px; border: 2px solid #222; background: #fff; flex: none; }
.l1 { width: 143px; padding-left: 11px; margin-right: 11px; letter-spacing: -.4px; }
.l2 { width: 150px; padding-left: 11px; margin-right: 23px; letter-spacing: -.6px; }
.l3 { width: 66px; letter-spacing: -.5px; }
.combo { position: relative; height: 31px; border: 1px solid #adadad; background: #e1e1e1; padding-left: 3px; display: flex; align-items: center; letter-spacing: -.5px; }
.combo svg { width: 8px; height: 4px; margin-left: auto; margin-right: 5px; }
.units { flex: 1; height: 29px; }
.cols { display: flex; height: 519px; border-top: 1px solid #a0a0a0; padding-top: 14px; }
.left { width: 250px; flex: none; margin-right: 12px; }
.tree { height: 334px; display: flex; border: solid #777; border-width: 1px 0 0 1px; background: #fff; overflow: hidden; font-size: 22.3px; letter-spacing: -.1px; }
.rows { flex: 1; height: 333px; overflow: hidden; white-space: nowrap; }
.rows div { height: 34.05px; line-height: 34px; padding-left: 3px; display: flex; align-items: center; justify-content: space-between; padding-right: 15px; }
.rows .head { height: 49px; padding: 2px 0 0 7px; }
.rows .sub { padding: 0 0 0 43px; }
.rows .sel { background: #cce8ff; }
.rows svg { width: 14px; height: 14px; }
.tscroll { width: 30px; background: #f0f0f0; display: flex; flex-direction: column; align-items: center; padding: 14px 0 12px; }
.tscroll svg { stroke: #555; stroke-width: 2.4; flex: none; }
.tscroll i { width: 30px; height: 151px; margin: 11px 0 auto; background: #cdcdcd; }
.strip { height: 26px; display: flex; border: solid #777; border-width: 1px 0 1px 1px; background: #fff; font-size: 14px; line-height: 26px; text-align: center; margin-bottom: 11px; overflow: hidden; color: #444; }
.strip span { width: 25px; flex: none; border-right: 1px solid #777; display: flex; justify-content: center; }
.strip .blank { width: 153px; }
.strip .last { border: 0; }
.desc { height: 132px; border: solid #777; border-width: 1px 0 0 1px; background: #fff; padding: 4px 0 0 4px; line-height: 25px; letter-spacing: -.35px; white-space: nowrap; }
.right { flex: 1; border: solid #dcdcdc; border-width: 1px 0 0 1px; padding-left: 4px; }
.dialog h3 { font: inherit; margin: 0; height: 24px; padding: 5px 0 0 3px; letter-spacing: -.4px; }
.dialog .fs { height: 32px; padding-top: 12px; }
.box { background: #e2e2e2; border-radius: 3px; }
.opts { height: 185px; padding: 20px 3px 0 20px; }
.r { display: flex; align-items: center; letter-spacing: -.45px; }
.r label { width: 224px; }
.r1 .combo { flex: 1; }
.r2 { margin-top: 12px; }
.input { width: 150px; height: 28px; border: 1px solid #777; background: #fff; padding-left: 2px; }
.r3 { margin-top: 12px; }
.fmt { height: 70px; display: flex; align-items: center; padding-left: 20px; letter-spacing: -.5px; }
.fmt .combo { width: 50px; }
.f1 { width: 88px; }
.f2 { width: 93px; margin-left: 12px; }
.f3 { margin-left: 12px; }
.actions { display: flex; gap: 14px; padding: 12px 1px 0; }
.actions button { width: 148px; height: 44px; padding: 2px 0 0; border: 1px solid #adadad; background: #e1e1e1; font: inherit; letter-spacing: -.5px; white-space: nowrap; }
.push { margin-left: auto; }
.dialog footer { height: 37px; border-top: 1px solid #858585; background: #e5e5e5; color: #444; font-size: 22.5px; line-height: 36px; padding-left: 5px; display: flex; justify-content: space-between; align-items: flex-end; padding-right: 4px; letter-spacing: .08px; }
.dialog footer svg { margin-bottom: 3px; }
```
